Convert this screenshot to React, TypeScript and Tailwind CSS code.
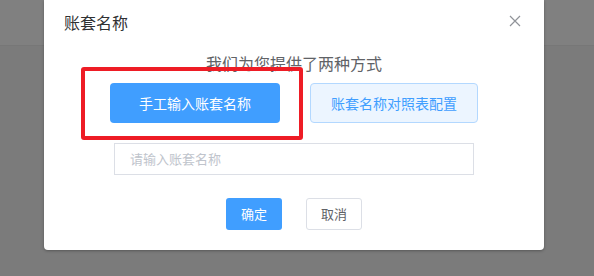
export default function App() {
  return (
    <div
      className="relative h-[276px] w-[594px] overflow-hidden bg-[#7b7b7b]"
      style={{ fontFamily: '"Noto Sans CJK SC", "Noto Sans", sans-serif' }}
    >
      {/* page behind the mask */}
      <div className="h-[46px] border-b border-[#777] bg-[#808080]" />

      {/* dialog */}
      <div className="absolute left-[44px] top-0 flex w-[500px] flex-col items-center rounded-b-sm bg-white pb-[20px] shadow-[0_1px_3px_rgba(0,0,0,0.3)]">
        <div className="flex h-[44px] w-full items-start justify-between pl-[20px] pr-[23px] pt-[10px]">
          <span className="text-[16px] leading-[24px] text-[#303133]">账套名称</span>
          <svg width="12" height="12" viewBox="0 0 12 12" className="mt-[5px]">
            <path d="M1 1L11 11M11 1L1 11" stroke="#909399" strokeWidth="1.2" />
          </svg>
        </div>

        <div className="mt-[9px] text-[16px] leading-[20px] text-[#606266]">我们为您提供了两种方式</div>

        <div className="mt-[10px] flex gap-[30px]">
          <button className="h-[40px] w-[170px] rounded-[4px] bg-[#409eff] text-[14px] text-white">
            手工输入账套名称
          </button>
          <button className="h-[40px] w-[168px] rounded-[4px] border border-[#b3d8ff] bg-[#ecf5ff] text-[14px] text-[#409eff]">
            账套名称对照表配置
          </button>
        </div>

        <div className="mt-[20px] flex h-[32px] w-[360px] items-center border border-[#dcdfe6] px-[15px] text-[13px] text-[#c0c4cc]">
          请输入账套名称
        </div>

        <div className="mt-[23px] flex gap-[24px]">
          <button className="h-[32px] w-[56px] rounded-[3px] bg-[#409eff] text-[13px] text-white">确定</button>
          <button className="h-[32px] w-[56px] rounded-[3px] border border-[#dcdfe6] bg-white text-[13px] text-[#606266]">
            取消
          </button>
        </div>

        {/* annotation box */}
        <div className="absolute left-[37px] top-[67px] h-[73px] w-[222px] rounded-[3px] border-4 border-[#ee1c25]" />
      </div>
    </div>
  );
}
